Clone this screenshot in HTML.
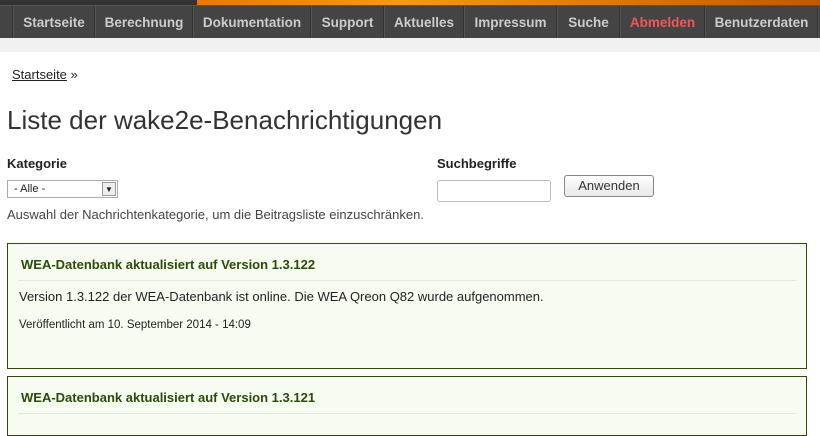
<!DOCTYPE html>
<html><head><meta charset="utf-8"><style>
*{margin:0;padding:0;box-sizing:border-box}
body{width:820px;height:419px;overflow:hidden;background:#fff;font-family:"Liberation Sans",Arial,sans-serif;color:#222;position:relative}
.top{position:absolute;left:0;top:0;width:820px;height:5px;background:linear-gradient(90deg,#333 0,#333 197px,#e87a00 197px,#f59a10 400px,#c25800 820px)}
.nav{position:absolute;top:5px;left:0;width:820px;height:33px;background:#444;border-top:1px solid #555}
.nav div{position:absolute;top:0;height:33px;border-left:1px solid #333;box-shadow:inset 1px 0 #555;color:#ccc;font-weight:bold;font-size:13.5px;line-height:33px;text-align:center}
.band{position:absolute;top:38px;left:0;width:820px;height:14px;background:#f1f1f1}
.abs{position:absolute}
.box{position:absolute;left:7px;width:800px;background:#f6fcef;border:1px solid #2e4b05}
.box h3{position:absolute;left:13px;top:13px;font-size:13px;color:#2c4a0a}
.box .hr{position:absolute;left:10px;right:10px;top:36px;height:1px;background:#e2e8dc}
</style></head><body>
<div class="top"></div>
<div class="nav">
<div style="left:12px;width:83px">Startseite</div>
<div style="left:94px;width:99px">Berechnung</div>
<div style="left:192px;width:119px">Dokumentation</div>
<div style="left:310px;width:74px">Support</div>
<div style="left:383px;width:81px">Aktuelles</div>
<div style="left:463px;width:94px">Impressum</div>
<div style="left:556px;width:64px">Suche</div>
<div style="left:619px;width:86px;color:#f55555">Abmelden</div>
<div style="left:704px;width:114px">Benutzerdaten</div>
<div style="left:817px;width:3px"></div>
</div>
<div class="band"></div>
<div class="abs" style="left:12px;top:67px;font-size:13px"><span style="text-decoration:underline">Startseite</span> »</div>
<div class="abs" style="left:7px;top:105px;font-size:26px;color:#333">Liste der wake2e-Benachrichtigungen</div>
<div class="abs" style="left:7px;top:156px;font-size:13px;font-weight:bold">Kategorie</div>
<div class="abs" style="left:7px;top:180px;width:111px;height:18px;border:1px solid #aaa;font-size:11px;line-height:16px;padding-left:6px;background:#fff">- Alle -<span style="position:absolute;right:1px;top:1px;width:14px;height:14px;background:#eee;border:1px solid #999;font-size:8px;line-height:13px;text-align:center">▼</span></div>
<div class="abs" style="left:7px;top:207px;font-size:13px;color:#444">Auswahl der Nachrichtenkategorie, um die Beitragsliste einzuschränken.</div>
<div class="abs" style="left:437px;top:156px;font-size:13px;font-weight:bold">Suchbegriffe</div>
<div class="abs" style="left:437px;top:180px;width:114px;height:22px;border:1px solid #bbb;border-radius:3px"></div>
<div class="abs" style="left:564px;top:175px;width:90px;height:22px;border:1px solid #888;border-radius:3px;background:linear-gradient(#fff,#e8e8e8);font-size:13px;text-align:center;line-height:20px;color:#333">Anwenden</div>
<div class="box" style="top:243px;height:126px"><h3>WEA-Datenbank aktualisiert auf Version 1.3.122</h3><div class="hr"></div>
<div class="abs" style="left:11px;top:45px;font-size:13px">Version 1.3.122 der WEA-Datenbank ist online. Die WEA Qreon Q82 wurde aufgenommen.</div>
<div class="abs" style="left:11px;top:75px;font-size:11.5px">Veröffentlicht am 10. September 2014 - 14:09</div></div>
<div class="box" style="top:376px;height:60px"><h3>WEA-Datenbank aktualisiert auf Version 1.3.121</h3><div class="hr"></div></div>
</body></html>
